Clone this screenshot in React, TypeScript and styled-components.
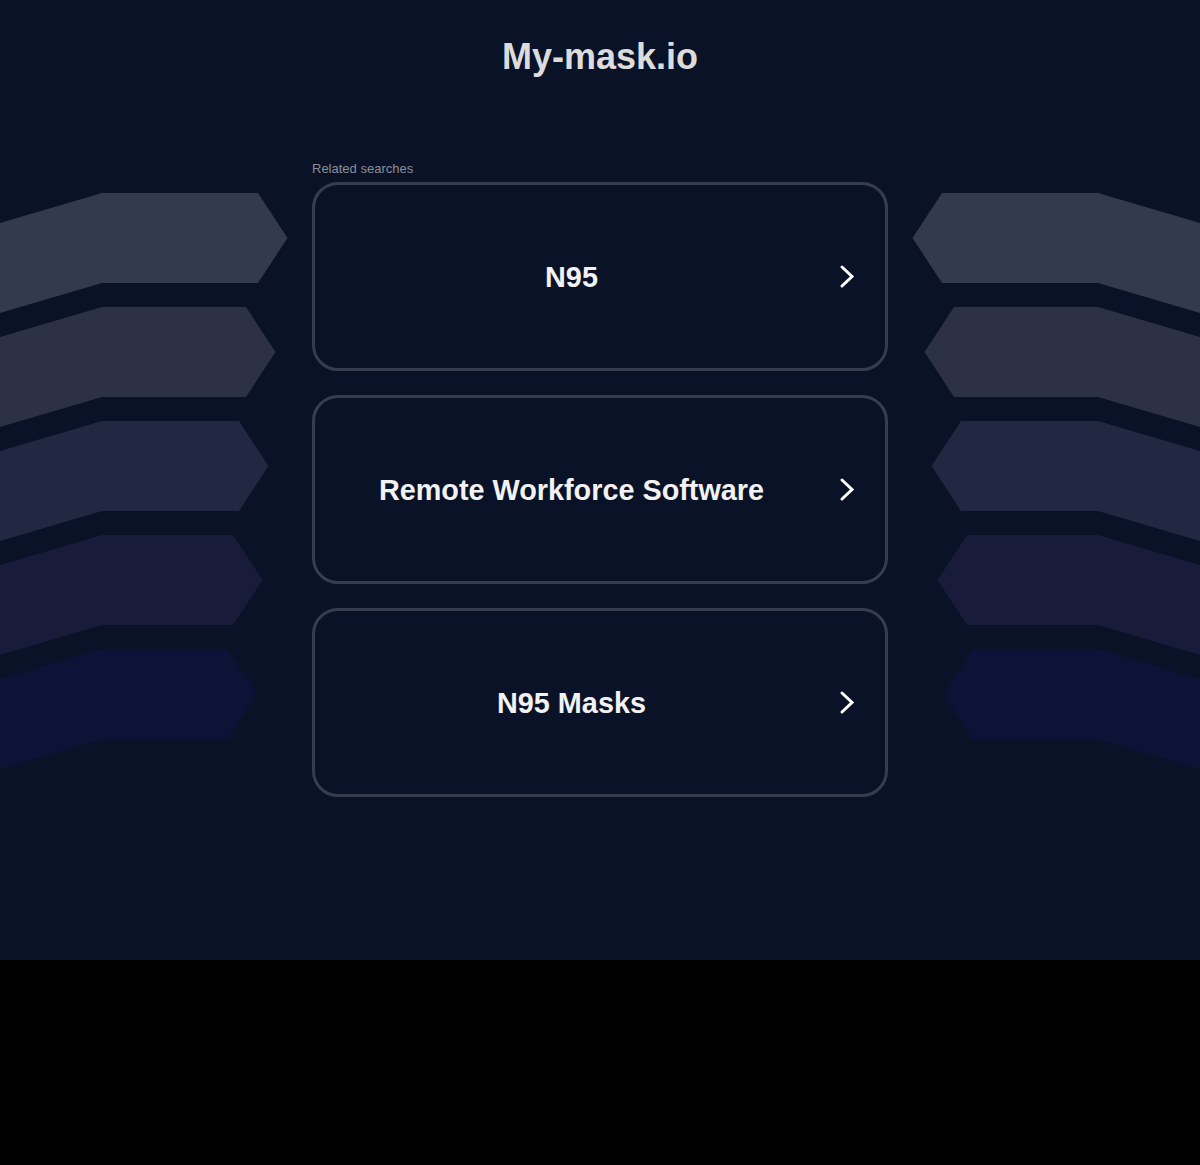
import React from "react";
import styled, { createGlobalStyle } from "styled-components";

const GlobalStyle = createGlobalStyle`
  html, body {
    margin: 0;
    padding: 0;
    background: #000000;
  }
  body {
    font-family: "Liberation Sans", Arial, sans-serif;
  }
  * { box-sizing: border-box; }
`;

const Page = styled.div`
  position: relative;
  width: 1200px;
  height: 960px;
  background: #0a1228;
  overflow: hidden;
`;

const Decoration = styled.svg`
  position: absolute;
  left: 0;
  top: 0;
  width: 1200px;
  height: 960px;
  z-index: 0;
  pointer-events: none;
`;

const Content = styled.main`
  position: relative;
  z-index: 1;
  display: flex;
  flex-direction: column;
  align-items: center;
  padding-top: 37px;
`;

const Title = styled.h1`
  margin: 0;
  font-size: 36px;
  line-height: 40px;
  font-weight: 700;
  color: #dcdcdc;
  text-align: center;
`;

const Section = styled.section`
  width: 576px;
  margin-top: 84px;
  display: flex;
  flex-direction: column;
`;

const Label = styled.div`
  font-size: 13px;
  line-height: 16px;
  color: #8b8f9a;
  margin-bottom: 5px;
`;

const List = styled.div`
  display: flex;
  flex-direction: column;
  gap: 24px;
`;

const Card = styled.a`
  display: grid;
  grid-template-columns: 1fr auto;
  align-items: center;
  height: 189px;
  border: 3px solid #363d51;
  border-radius: 26px;
  background: #0a1228;
  text-decoration: none;
  cursor: pointer;
`;

const CardText = styled.span`
  text-align: center;
  font-size: 28.8px;
  font-weight: 700;
  color: #f2f2f2;
  line-height: 34px;
`;

const Chevron = styled.svg`
  display: block;
  width: 16px;
  height: 25px;
  margin: 0 30px 0 11px;
`;

type Wing = { top: number; tip: number; color: string };

const wings: Wing[] = [
  { top: 193, tip: 258, color: "#343a4e" },
  { top: 307, tip: 246, color: "#2c3146" },
  { top: 421, tip: 239, color: "#232842" },
  { top: 535, tip: 233, color: "#181b3a" },
  { top: 649, tip: 227, color: "#0d1337" },
];

const wingPoints = (w: Wing, mirror: boolean) => {
  const T = w.top;
  const B = T + 90;
  const pts: [number, number][] = [
    [0, T + 30],
    [102, T],
    [w.tip, T],
    [w.tip + 29.5, T + 45],
    [w.tip, B],
    [102, B],
    [0, B + 30],
  ];
  return pts.map(([x, y]) => `${mirror ? 1200 - x : x},${y}`).join(" ");
};

const searches = ["N95", "Remote Workforce Software", "N95 Masks"];

export default function App() {
  return (
    <>
      <GlobalStyle />
      <Page>
        <Decoration viewBox="0 0 1200 960" aria-hidden="true">
          {wings.map((w, i) => (
            <g key={i} fill={w.color}>
              <polygon points={wingPoints(w, false)} />
              <polygon points={wingPoints(w, true)} />
            </g>
          ))}
        </Decoration>
        <Content>
          <Title>My-mask.io</Title>
          <Section>
            <Label>Related searches</Label>
            <List>
              {searches.map((s) => (
                <Card key={s}>
                  <CardText>{s}</CardText>
                  <Chevron viewBox="0 0 16 25">
                    <polyline
                      points="3,3 13,12.5 3,22"
                      fill="none"
                      stroke="#ffffff"
                      strokeWidth="3"
                      strokeLinecap="round"
                      strokeLinejoin="miter"
                    />
                  </Chevron>
                </Card>
              ))}
            </List>
          </Section>
        </Content>
      </Page>
    </>
  );
}
